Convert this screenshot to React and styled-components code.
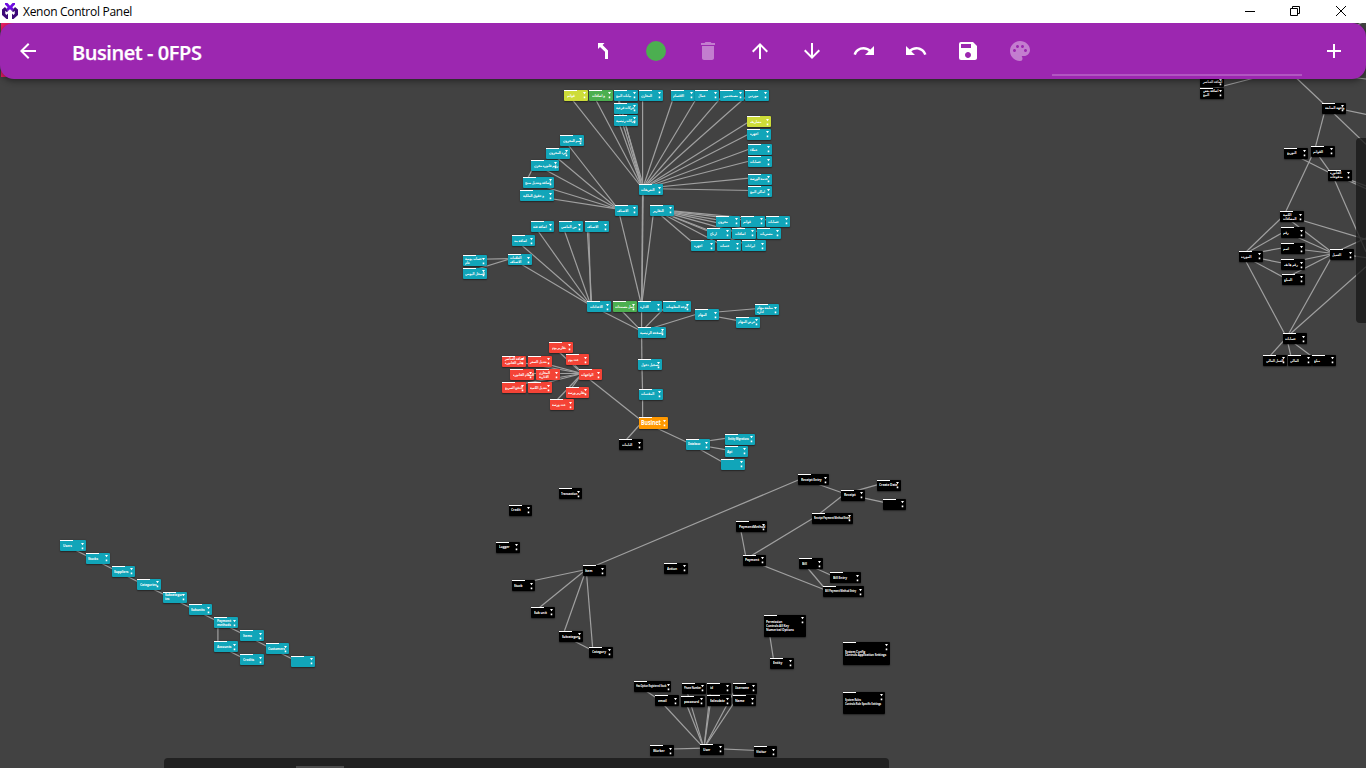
import React from 'react';
import styled, { createGlobalStyle } from 'styled-components';
import {
  MdArrowBack, MdDelete, MdArrowUpward, MdArrowDownward, MdRedo, MdUndo, MdSave, MdPalette, MdAdd,
} from 'react-icons/md';

const Global = createGlobalStyle`
  * { box-sizing: border-box; }
  html, body { margin: 0; padding: 0; overflow: hidden; background: #424242; }
`;

const Window = styled.div`
  width: 1366px;
  height: 768px;
  display: flex;
  flex-direction: column;
  overflow: hidden;
  background: #424242;
  font-family: 'Open Sans', 'Noto Sans', sans-serif;
`;

const TitleBar = styled.header`
  flex: none;
  height: 23px;
  display: flex;
  align-items: center;
  padding-left: 2px;
  background: #fff;
  color: #000;
`;

const TitleText = styled.span`
  flex: 1;
  padding-left: 5px;
  font-size: 12px;
  line-height: 22px;
  letter-spacing: -0.28px;
  white-space: nowrap;
`;

const WindowButton = styled.div`
  width: 46px;
  height: 23px;
  display: grid;
  place-items: center;
  padding-bottom: 2px;
  &:last-child { margin-right: 2px; }
`;

const Workspace = styled.main`
  position: relative;
  flex: 1;
  overflow: hidden;
`;

const AppBar = styled.nav`
  position: relative;
  z-index: 3;
  height: 56px;
  display: flex;
  align-items: center;
  padding: 0 8px 0 4px;
  border-radius: 14px;
  background: #9c27b0;
  color: #fff;
  box-shadow: 0 2px 6px rgba(0, 0, 0, 0.45);
`;

const IconButton = styled.div`
  flex: none;
  width: ${(p) => p.$width || 52}px;
  height: 48px;
  display: grid;
  place-items: center;
  opacity: ${(p) => (p.$disabled ? 0.4 : 1)};
  svg { display: block; }
`;

const Heading = styled.h1`
  flex: none;
  width: 526px;
  margin: 0;
  padding: 3px 0 0 20px;
  font-size: 20px;
  font-weight: 600;
  line-height: 28px;
  letter-spacing: -0.43px;
  -webkit-text-stroke: 0.25px #fff;
  white-space: nowrap;
`;

const Dot = styled.span`
  width: 20px;
  height: 20px;
  border-radius: 50%;
  background: #4caf50;
`;

const SearchField = styled.div`
  align-self: flex-end;
  width: 250px;
  height: 30px;
  margin: 0 8px 3px 6px;
  border-bottom: 2px solid rgba(255, 255, 255, 0.22);
`;

const Marker = styled.div`
  position: absolute;
  left: 1px;
  top: 0;
  width: 16px;
  height: 54px;
  background: #e91e63;
`;

const Canvas = styled.div`
  position: absolute;
  left: 0;
  top: -23px;
  width: 1366px;
  height: 768px;
`;

const Edges = styled.svg`
  position: absolute;
  inset: 0;
  stroke: #a0a0a0;
  stroke-width: 1.2;
`;

const fills = {
  cyan: '#11a5b9', black: '#000', red: '#f44336', green: '#4caf50', lime: '#cddc39', orange: '#ff9800',
};

const NodeBox = styled.div`
  position: absolute;
  left: ${(p) => p.$x}px;
  top: ${(p) => p.$y}px;
  width: ${(p) => p.$w}px;
  height: ${(p) => p.$h}px;
  display: flex;
  align-items: center;
  padding: 0 0 0 2.6px;
  border-radius: 1px;
  background: ${(p) => fills[p.$tone]};
  color: #fff;
  box-shadow: 0 0.5px 1.5px rgba(0, 0, 0, 0.45);
  &::before {
    content: '';
    position: absolute;
    left: 0.3px;
    top: 0;
    width: 13px;
    height: 1px;
    background: #fff;
  }
`;

const Label = styled.span`
  flex: none;
  font-family: 'Open Sans', 'DejaVu Sans', sans-serif;
  font-size: ${(p) => p.$size}px;
  font-weight: 700;
  line-height: 1.05;
  letter-spacing: -0.1px;
  white-space: pre;
  transform: scaleX(${(p) => p.$stretch});
  transform-origin: 0 50%;
`;

const Ports = styled.svg`
  position: absolute;
  right: 1.8px;
  top: 2.4px;
  width: 3px;
  height: 7px;
  fill: #fff;
`;

const SidePanel = styled.div`
  position: absolute;
  z-index: 2;
  left: 1356px;
  top: 138px;
  width: 14px;
  height: 185px;
  border-radius: 4px;
  background: rgba(24, 24, 24, 0.78);
`;

const BottomPanel = styled.div`
  position: absolute;
  z-index: 2;
  left: 164px;
  top: 758px;
  width: 725px;
  height: 10px;
  padding: 8px 0 0 132px;
  border-radius: 4px 4px 0 0;
  background: #212121;
`;

const Thumb = styled.div`
  width: 48px;
  height: 2px;
  background: #4b4b4b;
`;

// id: [x, y, label, tone, width, height, label size]
const nodes = {
  t1: [564, 89.7, 'قوائم', 'lime'],
  t2: [589, 89.7, 'و اضافات', 'green'],
  t3: [613.7, 89.7, 'بيانات البيع'],
  t4: [638.7, 89.7, 'المخازن'],
  t5: [670.7, 89.7, 'الاقسام'],
  t6: [695, 89.7, 'عمال'],
  t7: [720, 89.7, 'مستخدمين'],
  t8: [745, 89.7, 'موردين'],
  t9: [613.7, 102.3, 'حركات فرعية'],
  t10: [613.7, 114.7, 'حركات رئيسية'],
  r1: [747, 116, 'مصاريف', 'lime'],
  r2: [747, 128.5, 'اجهزة'],
  r3: [747.7, 143.7, 'عملاء'],
  r4: [747.7, 156, 'حسابات'],
  r5: [747.7, 173.3, 'خدمة الورشة'],
  r6: [747.7, 186, 'اماكن البيع'],
  l1: [560, 135, 'اسم المخزون'],
  l2: [546, 147.3, 'جرد المخزون'],
  l3: [531, 159.7, 'رقم فاتورة مخزن', 'cyan', 28],
  l4: [522.3, 176.7, 'اضافة وتعديل منتج', 'cyan', 31.5],
  l5: [520, 190, 'و حقوق الملكية', 'cyan', 34],
  h1: [638.7, 184, 'التعريفات'],
  h2: [614.3, 204.7, 'الاصناف'],
  h3: [650, 204.7, 'التقارير'],
  g1: [715.7, 215.7, 'مخزون'],
  g2: [740.7, 215.7, 'قوائم'],
  g3: [765.7, 215.7, 'حسابات'],
  g4: [707, 227.7, 'ارباح'],
  g5: [732, 227.7, 'اضافات'],
  g6: [757, 227.7, 'مشتريات'],
  g7: [691, 240, 'اجهزة'],
  g8: [717, 240, 'خدمات'],
  g9: [742, 240, 'ايرادات'],
  m1: [530.3, 221, 'اضافة فئة'],
  m2: [558.7, 221, 'من الماضي'],
  m3: [584.7, 221, 'الاصناف'],
  m4: [511.3, 235, 'اضافة بند'],
  m5: [507.7, 254, 'العلامات\nالاصناف'],
  m6: [462.7, 255, 'حساب يومية\nعام'],
  m7: [462.7, 267.7, 'السجل اليومي'],
  c1: [587, 301, 'الاعدادات'],
  c2: [612.7, 301, 'عمل مستندات', 'green'],
  c3: [637.7, 301, 'الادارة'],
  c4: [663, 301, 'لوحة المعلومات', 'cyan', 28],
  c5: [637.7, 326.7, 'الصفحة الرئيسية', 'cyan', 28],
  c6: [695, 309, 'المهام'],
  c7: [754.7, 304, 'متابعة مهام\nادارة'],
  c8: [735.7, 316.3, 'عرض المهام'],
  c9: [638, 359, 'تسجيل دخول'],
  c10: [638.7, 388.3, 'المقدمات'],
  biz: [638.7, 417, 'Businet', 'orange', 29.3, 12, 6.2],
  d1: [549, 341.7, 'تقارير يوم', 'red'],
  d2: [565.3, 354, 'عدد يوم', 'red'],
  d3: [502, 355.3, 'اضافة العناصر\nعلى الفاتورة', 'red'],
  d4: [527.7, 355.7, 'تعديل السعر', 'red'],
  d5: [510, 369, 'النظام الفاتورة', 'red'],
  d6: [536, 369, 'المخازن\nالادارية', 'red'],
  dh: [578.3, 369, 'الواجهات', 'red'],
  d7: [502, 382, 'الدفع السريع', 'red'],
  d8: [527.7, 382, 'تعديل الكمية', 'red'],
  d9: [565.3, 386.7, 'تقارير ورشة', 'red'],
  d10: [549.7, 399, 'عدد ورشة', 'red'],
  e0: [619, 439, 'الثابتات', 'black'],
  e1: [685.7, 439, 'Database', 'cyan', 23.7, 11, 3.2],
  e2: [725, 433.3, 'Entity Migrations', 'cyan', 29.5, 11, 3],
  e3: [724.3, 445.7, 'Api'],
  e4: [720.7, 458.7, ''],
  x1: [1200, 76, 'اضافة العناصر', 'black'],
  x2: [1200, 87.3, 'اضافة بعض\nالبيع', 'black'],
  x3: [1322, 102.3, 'واجهة المتابعة', 'black'],
  x4: [1284, 147.3, 'التوزيع', 'black'],
  x5: [1310.7, 145.7, 'القوائم', 'black'],
  x6: [1327.7, 169.3, 'الفاتورة\nمدفوعات', 'black'],
  y1: [1280, 211, 'الكمية\nالمضافات', 'black'],
  y2: [1280.7, 227, 'رقم', 'black'],
  y3: [1280.7, 243, 'اسم', 'black'],
  y4: [1281, 259, 'رقم هاتف', 'black'],
  y5: [1281.3, 273.7, 'المبلغ', 'black'],
  y6: [1238.7, 250.7, 'الموردة', 'black'],
  y7: [1329.7, 249, 'العميل', 'black'],
  y8: [1282.7, 333, 'حسابات', 'black'],
  y9: [1263, 354.7, 'العمل المالي', 'black'],
  y10: [1287.7, 354.7, 'المالي', 'black'],
  y11: [1311.7, 354.7, 'مبلغ', 'black'],
  p1: [558.3, 488, 'Transaction', 'black', 23.7, 11, 3.4],
  p2: [508.3, 504.3, 'Credit', 'black'],
  p3: [496, 541.3, 'Logger', 'black'],
  p4: [582.3, 565, 'Item', 'black'],
  p5: [664, 562.7, 'Action', 'black'],
  p6: [511.3, 580, 'Stock', 'black'],
  p7: [531, 606.7, 'Sub unit', 'black'],
  p8: [559, 630.7, 'Subcategory', 'black', 23.7, 11, 3.5],
  p9: [589, 646.3, 'Category', 'black'],
  q1: [798, 474, 'Receipt Entry', 'black', 30.5],
  q2: [841, 489.3, 'Receipt', 'black'],
  q3: [876.7, 479.3, 'Create Date', 'black'],
  q4: [882.3, 498.3, '', 'black'],
  q5: [811.7, 512.3, 'Receipt Payment Method Entry', 'black', 41, 11, 2.9],
  q6: [736, 521, 'PaymentMethod', 'black', 30.5],
  q7: [742.3, 554.3, 'Payment', 'black'],
  q8: [799, 558, 'Bill', 'black'],
  q9: [830, 572, 'Bill Entry', 'black', 30.5],
  q10: [822.7, 586, 'Bill Payment Method Entry', 'black', 41, 11, 2.9],
  q11: [763.3, 614.7, 'Permission\nControls All Key\nNumerical Options', 'black', 42, 22, 3.6],
  q12: [770, 657.3, 'Entity', 'black'],
  q13: [842.3, 641.5, 'System Config\nControls Application Settings', 'black', 47.5, 23, 3.5],
  q14: [842.3, 691.3, 'System Roles\nControls Role Specific Settings', 'black', 42.5, 22, 3],
  s1: [60, 540, 'Users', 'cyan', 26],
  s2: [85.7, 552.7, 'Stocks'],
  s3: [111.3, 565.7, 'Suppliers'],
  s4: [137, 578.7, 'Categories'],
  s5: [162.7, 591.3, 'Subcategor\nies'],
  s6: [188.3, 604, 'Subunits'],
  s7: [214, 617, 'Payment\nmethods'],
  s8: [240, 630, 'Items'],
  s9: [265.3, 643, 'Customers'],
  s10: [291, 655.7, ''],
  s11: [214, 641, 'Accounts'],
  s12: [240, 654, 'Credits'],
  u1: [633.7, 681, 'Has Option Registered Stock', 'black', 37.5, 11, 2.7],
  u2: [655, 695, 'email', 'black'],
  u3: [681.7, 682.3, 'Phone Number', 'black', 24, 11, 2.8],
  u4: [707, 682.3, 'id', 'black'],
  u5: [732.7, 682.3, 'Username', 'black', 23.7, 11, 3.3],
  u6: [681, 695.7, 'password', 'black'],
  u7: [707, 695, 'Salesdate', 'black'],
  u8: [732.3, 695, 'Name', 'black'],
  u9: [700, 743.7, 'User', 'black'],
  u10: [650, 745, 'Worker', 'black'],
  u11: [753.3, 746, 'Visitor', 'black'],
};

// Each hub followed by the nodes it is linked to.
const links = [
  'h1 t1 t2 t3 t4 t5 t6 t7 t8 t9 t10 r1 r2 r3 r4 r5 r6 c3',
  'h2 l1 l2 l3 l4 l5 c3',
  'l3 l4',
  'h3 c3 g1 g2 g3 g4 g5 g6 g7 g8 g9',
  'c1 m1 m2 m3 m4 m5',
  'm5 m6 m7',
  'c5 c1 c2 c3 c4 c6 c9',
  'c6 c7 c8',
  'c10 c9 biz',
  'dh d1 d2 d3 d4 d5 d6 d7 d8 d9 d10 biz',
  'biz e0 e1',
  'e1 e2 e3 e4',
  'x3 x5', 'x6 x5 x4', 'x5 y1',
  'y6 y1 y2 y3 y4 y5 y8',
  'y7 y1 y2 y3 y4 y5 y8',
  'y8 y9 y10 y11',
  'p4 q1 p6 p7 p8 p9', 'p8 p9',
  'q2 q1 q3 q4 q5', 'q7 q5 q6 q10', 'q8 q9 q10', 'q11 q12',
  's1 s2', 's2 s3', 's3 s4', 's4 s5', 's5 s6', 's6 s7', 's7 s8 s11', 's8 s9', 's9 s10', 's11 s12',
  'u2 u1', 'u9 u2 u3 u4 u5 u6 u7 u8 u10 u11',
];

const strayLines = [
  [1326, 106, 1290, 72], [1204, 91, 1270, 74], [1326, 106, 1366, 114.3], [1326, 106, 1366, 144.3],
  [1331.5, 173, 1366, 251.7], [1331.5, 173, 1366, 186], [1331.5, 173, 1366, 188.7],
  [1284, 215, 1366, 239.3], [1286.7, 337, 1366, 266.7], [1333.5, 253, 1366, 238], [1333.5, 253, 1366, 257.7],
  [1350, 77, 1366, 79], [1356, 26, 1366, 20], [643.2, 188, 642, 305],
  [587, 225, 591.8, 305], [616.5, 94, 644, 188],
];

const anchor = (id) => [nodes[id][0] + 3.9, nodes[id][1] + 4.5];

const isArabic = (text) => /[\u0600-\u06ff]/.test(text);

function DiagramNode({ data }) {
  const [x, y, label, tone = 'cyan', w = 23.7, h = 11, size = 3.8] = data;
  return (
    <NodeBox $x={x + 0.2} $y={y + 0.3} $w={w} $h={h} $tone={tone}>
      <Label $size={size} $stretch={isArabic(label) ? 0.74 : 0.86}>{label}</Label>
      <Ports viewBox="0 0 3 7">
        <path d="M0 0h3L1.5 2.2z M0.7 4.5h1.6v1.7h-1.6z" />
      </Ports>
    </NodeBox>
  );
}

function Diagram() {
  return (
    <Canvas>
      <Edges width="1366" height="768">
        {links.flatMap((row) => {
          const [hub, ...ends] = row.split(' ');
          const [x1, y1] = anchor(hub);
          return ends.map((end) => {
            const [x2, y2] = anchor(end);
            return <line key={hub + end} x1={x1} y1={y1} x2={x2} y2={y2} />;
          });
        })}
        {strayLines.map(([x1, y1, x2, y2], i) => <line key={i} x1={x1} y1={y1} x2={x2} y2={y2} />)}
      </Edges>
      {Object.entries(nodes).map(([id, data]) => <DiagramNode key={id} data={data} />)}
      <SidePanel />
      <BottomPanel><Thumb /></BottomPanel>
    </Canvas>
  );
}

function Logo() {
  return (
    <svg width="16" height="17" viewBox="0 0 16 17">
      <path d="M3 0h2.5L8 2.7 10.5 0H13v1.5L10.3 4.2 12 6 10 8 8 6.2 6 8 4 6l1.7-1.8L3 1.5z" fill="#6d0be0" />
      <path d="M3 4 0 6.5V12l4.5 4H6v-5.5L4.5 12 3.3 10.8V7.7L5 9.2 6 8z M13 4l3 2.5V12l-4.5 4H10v-5.5l1.5 1.5 1.2-1.2V7.7L11 9.2 10 8z" fill="#3d0878" />
    </svg>
  );
}

export default function App() {
  return (
    <Window>
      <Global />
      <TitleBar>
        <Logo />
        <TitleText>Xenon Control Panel</TitleText>
        <WindowButton>
          <svg width="12" height="10"><path d="M2 5.5h10" stroke="#000" /></svg>
        </WindowButton>
        <WindowButton>
          <svg width="10" height="10" fill="none" stroke="#000"><path d="M.5 2.5h7v7h-7z M2.5 2.5v-2h7v7h-2" /></svg>
        </WindowButton>
        <WindowButton>
          <svg width="10" height="10" stroke="#000"><path d="M0 0l10 10M10 0L0 10" /></svg>
        </WindowButton>
      </TitleBar>
      <Workspace>
        <Marker />
        <AppBar>
          <IconButton $width={48}><MdArrowBack size={24} /></IconButton>
          <Heading>Businet - 0FPS</Heading>
          <IconButton>
            <svg width="24" height="24" viewBox="0 0 24 24">
              <path d="M6 4h6.5L10.6 6l5.4 5.4V20h-3v-7.2L8 8 6 10z" fill="#fff" />
            </svg>
          </IconButton>
          <IconButton><Dot /></IconButton>
          <IconButton $disabled><MdDelete size={24} /></IconButton>
          <IconButton><MdArrowUpward size={24} /></IconButton>
          <IconButton><MdArrowDownward size={24} /></IconButton>
          <IconButton><MdRedo size={24} /></IconButton>
          <IconButton><MdUndo size={24} /></IconButton>
          <IconButton><MdSave size={24} /></IconButton>
          <IconButton $disabled><MdPalette size={24} /></IconButton>
          <SearchField />
          <IconButton $width={48}><MdAdd size={24} /></IconButton>
        </AppBar>
        <Diagram />
      </Workspace>
    </Window>
  );
}
